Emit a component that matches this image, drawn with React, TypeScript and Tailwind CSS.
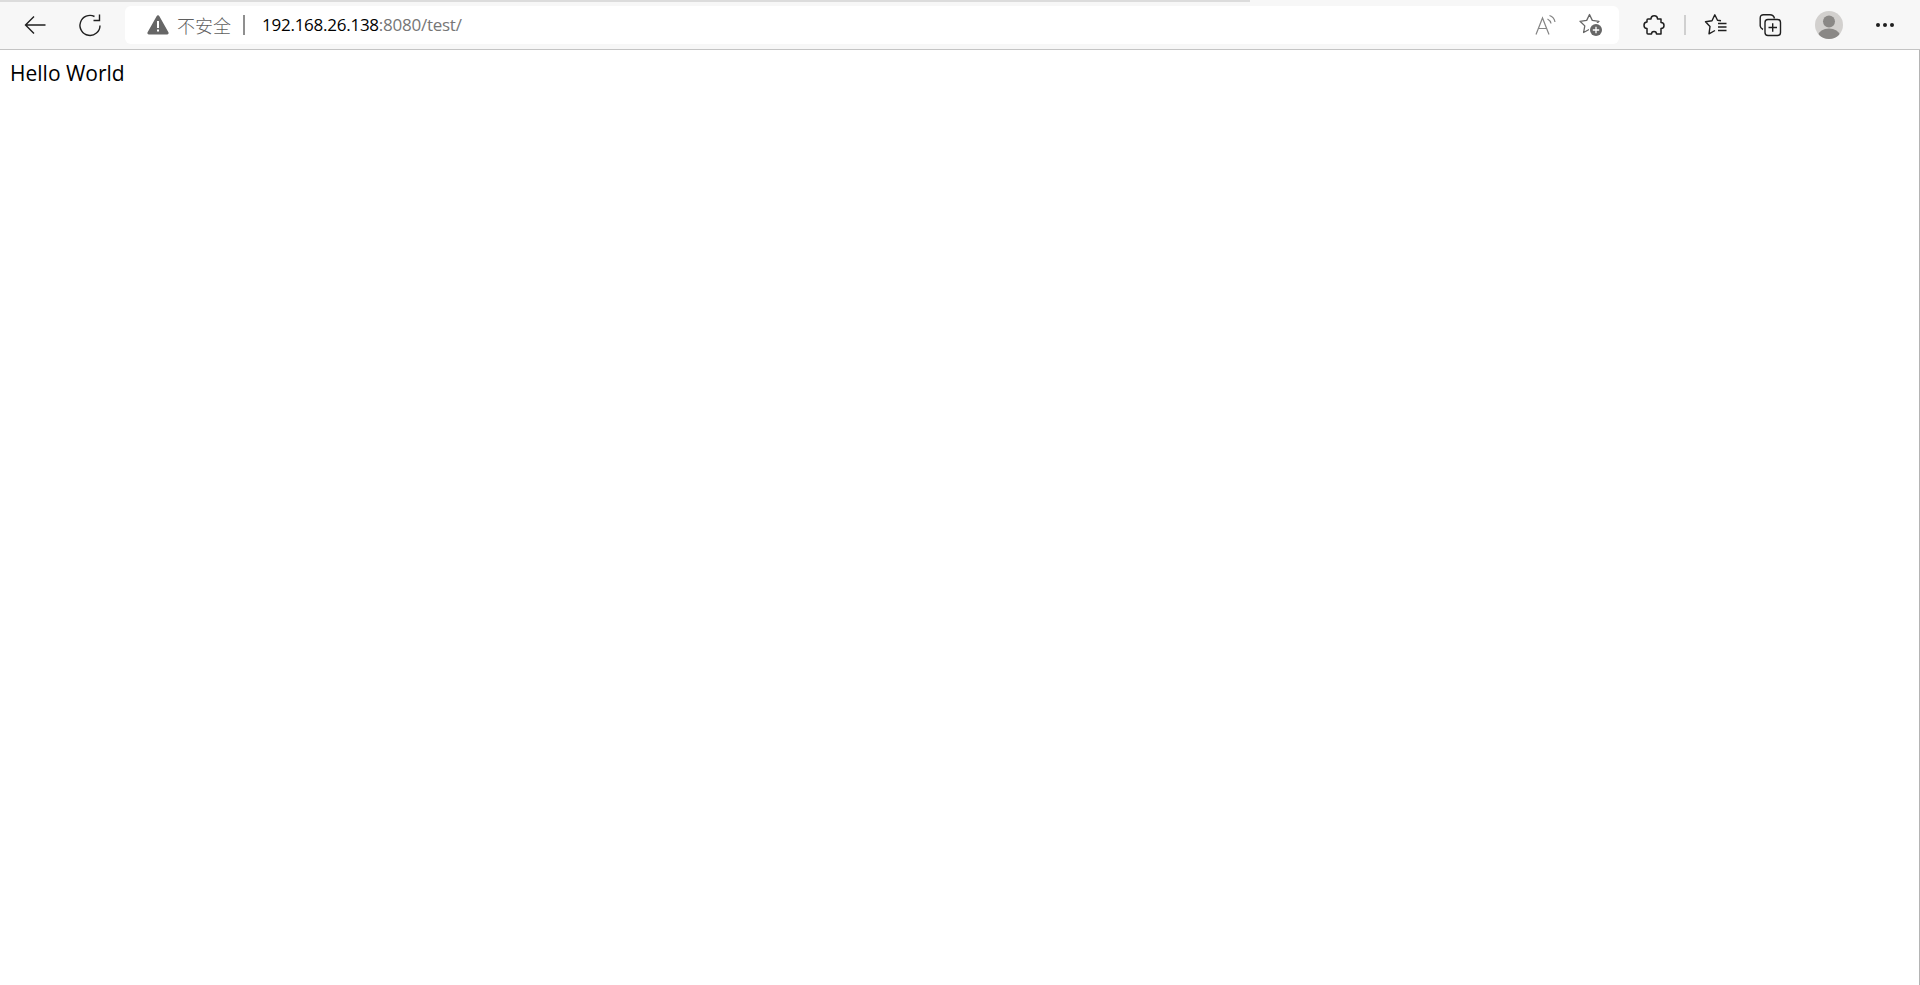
const ICON = "text-[#1f1f1f]";

function BackIcon() {
  return (
    <svg width="24" height="24" viewBox="0 0 24 24" fill="none" stroke="currentColor" strokeWidth="1.4" className={ICON}>
      <path d="M2.5 12H22.5M11 3.5L2.5 12L11 20.5" />
    </svg>
  );
}

function ReloadIcon() {
  return (
    <svg width="24" height="24" viewBox="0 0 24 24" fill="none" stroke="currentColor" strokeWidth="1.4" className={ICON}>
      <path d="M16.5 3.5A10 10 0 1 0 22 12.5" />
      <path d="M21.5 1.5V7.5H15.5" />
    </svg>
  );
}

function WarningIcon() {
  return (
    <svg width="22" height="20" viewBox="0 0 22 20">
      <path d="M9.6 1.2a1.6 1.6 0 0 1 2.8 0l9 16a1.5 1.5 0 0 1-1.4 2.3H2a1.5 1.5 0 0 1-1.4-2.3z" fill="#666666" />
      <path d="M10 6h2v7h-2zM10 14.5h2v2h-2z" fill="#ffffff" />
    </svg>
  );
}

function ReadAloudIcon() {
  return (
    <svg width="24" height="24" viewBox="0 0 24 24" fill="none" stroke="#858585" strokeWidth="1.2">
      <path d="M2 21.5L8.5 5L15 21.5M4.3 15.5H12.8" />
      <path d="M13.5 6C15.5 7 16.7 8.6 17 10.5M15.5 2.5C18.5 3.5 20.5 6 21 9" />
    </svg>
  );
}

function FavoriteAddIcon() {
  return (
    <svg width="24" height="24" viewBox="0 0 24 24" fill="none">
      <path d="M10.5 1.5L13.3 7.4L20 8.3L15.2 12.9L16.4 19.5L10.5 16.3L4.6 19.5L5.8 12.9L1 8.3L7.7 7.4Z" stroke="#666666" strokeWidth="1.3" strokeLinejoin="round" />
      <circle cx="17" cy="17" r="7.2" fill="#ffffff" />
      <circle cx="17" cy="17" r="6" fill="#666666" />
      <path d="M17 13.8V20.2M13.8 17H20.2" stroke="#ffffff" strokeWidth="1.3" />
    </svg>
  );
}

function ExtensionIcon() {
  return (
    <svg width="24" height="24" viewBox="0 0 24 24" fill="none" stroke="currentColor" strokeWidth="1.5" strokeLinejoin="round" className={ICON}>
      <path d="M9 6C9 1.5 15.5 1.5 15.5 6H19V9.5C23 9.5 23 15.5 19 15.5V21H14.5C14.5 17.5 9.5 17.5 9.5 21H6Q5 21 5 20V15.5C1 15.5 1 9 5 9V7Q5 6 6 6Z" />
    </svg>
  );
}

function FavoritesIcon() {
  return (
    <svg width="24" height="24" viewBox="0 0 24 24" fill="none" stroke="currentColor" strokeWidth="1.4" strokeLinejoin="round" className={ICON}>
      <path d="M17 7.8L13.5 7.2L10.8 1.8L8 7.7L1.5 8.7L6 13.5L5 20.8L11 17.5" />
      <path d="M14 10.5H22.5M14 14H22.5M14 17.5H22.5" />
    </svg>
  );
}

function CollectionsIcon() {
  return (
    <svg width="24" height="24" viewBox="0 0 24 24" fill="none" stroke="currentColor" strokeWidth="1.4" className={ICON}>
      <path d="M5 16.5C3 15.5 2.3 14.5 2.2 13V5C2.2 2.8 3.5 1.8 5.5 1.8H12C14.5 1.8 15.8 3 16.5 5.5" />
      <rect x="7" y="6.5" width="15.5" height="16" rx="3" />
      <path d="M14.7 10.2V18.8M10.5 14.5H19" />
    </svg>
  );
}

function Avatar() {
  return (
    <svg width="28" height="28" viewBox="0 0 28 28">
      <defs>
        <clipPath id="avatar-clip">
          <circle cx="14" cy="14" r="14" />
        </clipPath>
      </defs>
      <circle cx="14" cy="14" r="14" fill="#d2d0ce" />
      <g clipPath="url(#avatar-clip)" fill="#8a8886">
        <circle cx="14" cy="10.5" r="6" />
        <ellipse cx="14" cy="24" rx="10.5" ry="6.5" />
      </g>
    </svg>
  );
}

export default function App() {
  return (
    <div className="h-[985px] flex flex-col bg-white font-['Liberation_Sans',sans-serif] overflow-hidden">
      {/* browser chrome */}
      <header className="h-[50px] shrink-0 bg-[#f7f7f7] border-b border-[#c4c4c4] flex flex-col">
        <div className="h-[2px] w-[1250px] shrink-0 bg-[#dcdcdc]" />
        <div className="flex-1 flex items-center pb-[1px]">
          <div className="w-[125px] shrink-0 flex items-center pl-[23px] gap-[31px]">
            <BackIcon />
            <ReloadIcon />
          </div>
          <div className="w-[1494px] h-[38px] shrink-0 bg-white rounded-[6px] flex items-center pl-[22px] pr-[16px]">
            <WarningIcon />
            <span className="ml-[8px] text-[18px] text-[#5f5f5f] font-['Noto_Sans_CJK_SC',sans-serif] font-light">不安全</span>
            <div className="ml-[12px] w-[2px] h-[20px] bg-[#8f8f8f]" />
            <div className="ml-[17px] text-[17px] tracking-[-0.25px] font-['Open_Sans',sans-serif]">
              <span className="text-black">192.168.26.138</span>
              <span className="text-[#767676]">:8080/test/</span>
            </div>
            <div className="ml-auto flex items-center gap-[21px]">
              <ReadAloudIcon />
              <FavoriteAddIcon />
            </div>
          </div>
          <div className="ml-[23px]">
            <ExtensionIcon />
          </div>
          <div className="ml-[18px] w-[2px] h-[20px] bg-[#d0d0d0]" />
          <div className="ml-[18px]">
            <FavoritesIcon />
          </div>
          <div className="ml-[30px]">
            <CollectionsIcon />
          </div>
          <div className="ml-[33px]">
            <Avatar />
          </div>
          <div className="ml-[33px] flex items-center gap-[3px]">
            <span className="w-[4px] h-[4px] rounded-full bg-[#1f1f1f]" />
            <span className="w-[4px] h-[4px] rounded-full bg-[#1f1f1f]" />
            <span className="w-[4px] h-[4px] rounded-full bg-[#1f1f1f]" />
          </div>
        </div>
      </header>
      {/* page */}
      <main className="flex-1 border-r border-[#b4b4b4] pl-[10px] pt-[10px]">
        <p className="text-[21px] leading-[27px] text-black font-['Open_Sans',sans-serif]">Hello World</p>
      </main>
    </div>
  );
}
